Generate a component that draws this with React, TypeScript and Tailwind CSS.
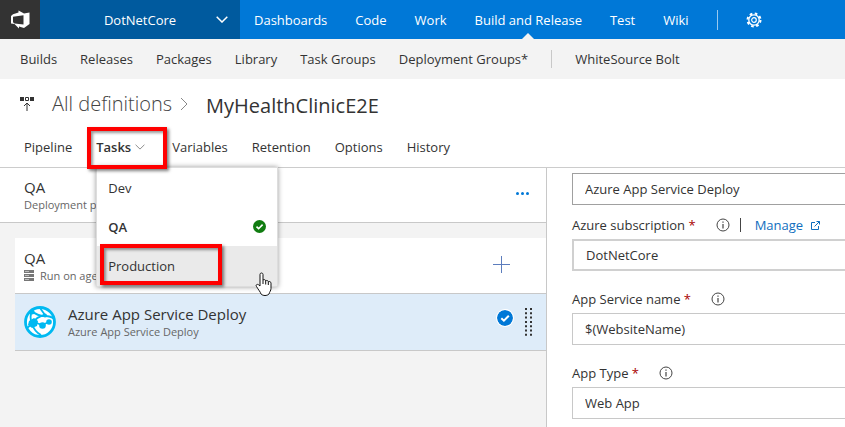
import type { ReactNode } from "react";

const hubs = ["Dashboards", "Code", "Work", "Build and Release", "Test", "Wiki"];
const sections = ["Builds", "Releases", "Packages", "Library", "Task Groups", "Deployment Groups*"];

function Chevron({ className, width = 1 }: { className: string; width?: number }) {
  return (
    <svg viewBox="0 0 12 7" className={className} fill="none" stroke="currentColor" strokeWidth={width} aria-hidden="true">
      <path d="M.7.8 6 6 11.3.8" />
    </svg>
  );
}

function Highlight({ className }: { className: string }) {
  return (
    <span
      className={`pointer-events-none absolute border-4 border-[#ff0000] shadow-[2px_2px_3px_rgba(0,0,0,0.5),inset_2px_2px_3px_rgba(0,0,0,0.4)] ${className}`}
    />
  );
}

function Logo() {
  return (
    <svg viewBox="0 0 20 20" className="h-5 w-5" aria-hidden="true">
      <path
        fill="#fff"
        fillRule="evenodd"
        d="M1 6 3 4.200 8.500 2.500V.5l5.500 3 5.500-1V14l-5.500 4-5-1.600v2L4.500 14 1 13.500ZM3 6.800v5.400l1.500 1.300 9 1V5.200Z"
      />
    </svg>
  );
}

function Gear() {
  return (
    <svg viewBox="0 0 16 16" className="h-4 w-4" fill="none" stroke="#fff" aria-hidden="true">
      <circle cx="8" cy="8" r="6.500" strokeWidth="2" strokeDasharray="2.600 2.505" />
      <circle cx="8" cy="8" r="5.200" strokeWidth="1.300" />
      <circle cx="8" cy="8" r="2.300" strokeWidth="1.200" />
    </svg>
  );
}

function InfoIcon() {
  return (
    <svg viewBox="0 0 14 14" className="h-3.5 w-3.5" fill="none" stroke="#444" aria-hidden="true">
      <circle cx="7" cy="7" r="6" />
      <path d="M7 6v4.500M7 3.500v1.200" strokeWidth="1.200" />
    </svg>
  );
}

function CheckBadge({ className }: { className: string }) {
  return (
    <svg viewBox="0 0 16 16" className={className} aria-hidden="true">
      <circle cx="8" cy="8" r="8" fill="currentColor" />
      <path d="m4.300 8.200 2.600 2.500 4.900-5" fill="none" stroke="#fff" strokeWidth="2" />
    </svg>
  );
}

function WebAppIcon() {
  return (
    <svg viewBox="0 0 32 32" className="h-8 w-8 shrink-0" aria-hidden="true">
      <circle cx="16" cy="16" r="14.500" fill="#fff" />
      <g fill="none" stroke="#00b9f1" strokeWidth="1.800">
        <path d="M8 5c3 3 8 5 13 5 4 0 7 1 9 3M21 9C15 10 11 13 8 18M8 18c2 6 5 9 9 11M10 16l8 3 7-3M8 5C6 9 6 13 8 18M8 18l-5 4M21 9l-5-7" />
      </g>
      <g fill="#00b9f1">
        <path d="m5 15 5-3 4 3-1 5-5 2-4-3Z" />
        <circle cx="21" cy="9.500" r="2" />
        <circle cx="18.500" cy="19.500" r="3.300" />
        <circle cx="25" cy="16" r="2.800" />
        <circle cx="8" cy="6" r="2.500" />
      </g>
      <circle cx="16" cy="16" r="14.500" fill="none" stroke="#00b9f1" strokeWidth="2.800" />
    </svg>
  );
}

function Field({ id, label, value, border, children }: { id: string; label: string; value: string; border: string; children?: ReactNode }) {
  return (
    <div>
      <div className="flex h-7 items-center">
        <label htmlFor={id}>
          {label} <span className="text-[#a80000]">*</span>
        </label>
        <button type="button" aria-label={`About ${label}`} className="ml-5">
          <InfoIcon />
        </button>
        {children}
      </div>
      <input id={id} defaultValue={value} className={`block h-8 w-full border-r-0 bg-white px-3 outline-none ${border}`} />
    </div>
  );
}

export default function App() {
  return (
    <div className="flex min-h-screen flex-col overflow-hidden bg-white font-['Open_Sans','Noto_Sans',sans-serif] text-[13px] leading-5 text-[#333]">
      <header className="flex h-[39px] bg-[#0078d7] whitespace-nowrap text-white">
        <a href="#home" aria-label="Home" className="flex w-10 shrink-0 items-center justify-center bg-[#333]">
          <Logo />
        </a>
        <button type="button" className="flex w-[200px] shrink-0 items-center justify-between bg-[#005a9e] pr-3 pl-6">
          <span className="flex-1 text-center">DotNetCore</span>
          <Chevron className="h-[7px] w-3" width={1.5} />
        </button>
        <nav className="flex items-center gap-7 pl-3.5">
          {hubs.map((hub) => (
            <a key={hub} href="#hub" className="relative flex h-full items-center">
              {hub}
              {hub === "Build and Release" && (
                <svg viewBox="0 0 12 6" className="absolute bottom-0 left-1/2 h-1.5 w-3 -translate-x-1/2" aria-hidden="true">
                  <path d="m0 6 6-6 6 6Z" fill="#f3f3f3" />
                </svg>
              )}
            </a>
          ))}
          <span className="h-5 w-px bg-white/60" />
          <button type="button" aria-label="Settings">
            <Gear />
          </button>
        </nav>
      </header>

      <nav className="flex h-10 items-center gap-[23px] bg-[#f3f3f3] pl-5 whitespace-nowrap">
        {sections.map((section) => (
          <a key={section} href="#section">{section}</a>
        ))}
        <span className="h-[18px] w-px bg-[#c8c8c8]" />
        <a href="#bolt">WhiteSource Bolt</a>
      </nav>

      <div className="flex h-[50px] items-center pl-5 text-[20px] leading-7 whitespace-nowrap">
        <svg viewBox="0 0 16 16" className="h-4 w-4 shrink-0" aria-hidden="true">
          <path fill="#333" d="M0 1h4v4H0Zm10 0h4v4h-4Z" />
          <path fill="none" stroke="#333" d="M5.500 1.500h3v3h-3ZM7 15V7.500M4 10l3-3 3 3" />
        </svg>
        <a href="#definitions" className="ml-4 font-light text-[#444]">All definitions</a>
        <svg viewBox="0 0 8 14" className="ml-2 h-3.5 w-2 shrink-0 text-[#888]" fill="none" stroke="currentColor" aria-hidden="true">
          <path d="m1 1 6 6-6 6" />
        </svg>
        <h1 className="ml-[18px] pt-1">MyHealthClinicE2E</h1>
      </div>

      <nav className="-mt-0.5 flex h-[41px] items-center gap-6 border-b border-[#ccc] pl-6 whitespace-nowrap">
        <a href="#pipeline">Pipeline</a>
        <div className="relative z-10 flex h-full w-[52px] items-center">
          <button type="button" aria-expanded="true" className="flex items-center gap-1 font-semibold">
            Tasks
            <Chevron className="h-1.5 w-2.5 text-[#777]" />
          </button>
          <div className="absolute top-full left-0 w-[182px] border border-[#ddd] bg-white shadow-[0_0_5px_rgba(0,0,0,0.4)]">
            <button type="button" className="flex h-[39px] w-full items-center px-[11px]">Dev</button>
            <button type="button" className="flex h-[39px] w-full items-center justify-between px-[11px] font-semibold">
              QA
              <CheckBadge className="h-[13px] w-[13px] text-[#107c10]" />
            </button>
            <button type="button" className="relative flex h-10 w-full items-center bg-[#eaeaea] px-[11px]">
              Production
              <Highlight className="-top-0.5 left-[3px] h-[41px] w-[122px]" />
            </button>
            <svg viewBox="0 0 18 24" className="absolute top-[104px] left-[157px] h-6 w-[18px]" aria-hidden="true">
              <path
                d="M6 14V2.500C6 .5 9 .5 9 2.500V8c1-.8 2.500-.4 2.700.8 1-.7 2.400-.3 2.600.9 1.200-.5 2.700 0 2.700 1.500v5.300c0 2-1.500 3.500-2 5.500-2 2-6 2-8 0-.5-2-2.500-4-4.500-7.500C1.200 12.800 3.500 11.800 4.600 12.800Z"
                fill="#fff"
                stroke="#111"
              />
              <path d="M9 8v4M11.700 9v3.500M14.300 10v3" stroke="#111" />
            </svg>
          </div>
          <Highlight className="top-0 -left-[9px] h-[42px] w-20" />
        </div>
        <a href="#variables">Variables</a>
        <a href="#retention">Retention</a>
        <a href="#options">Options</a>
        <a href="#history">History</a>
      </nav>

      <main className="flex flex-1">
        <section className="w-[547px] shrink-0 border-r border-[#c8c8c8] bg-[#f3f3f3]">
          <div className="flex h-[55px] items-center justify-between border-b border-[#c8c8c8] bg-white pr-[17px] pl-6">
            <div>
              <h2 className="text-[15px]">QA</h2>
              <p className="text-[11px] leading-4 text-[#666]">Deployment process</p>
            </div>
            <button type="button" aria-label="More actions" className="flex gap-0.5 pb-1">
              <i className="h-[3px] w-[3px] rounded-full bg-[#0078d7]" />
              <i className="h-[3px] w-[3px] rounded-full bg-[#0078d7]" />
              <i className="h-[3px] w-[3px] rounded-full bg-[#0078d7]" />
            </button>
          </div>

          <div className="mt-[15px] ml-[15px] bg-white">
            <div className="flex h-14 items-center justify-between border-b border-[#c8c8c8] pr-9 pl-[9px]">
              <div>
                <h3 className="text-[15px]">QA</h3>
                <p className="flex items-center gap-1.5 text-[11px] leading-4 text-[#666]">
                  <svg viewBox="0 0 10 11" className="h-[11px] w-2.5" aria-hidden="true">
                    <path fill="#777" d="M0 0h10v3H0Zm0 4h10v3H0Zm0 4h10v3H0Z" />
                    <path stroke="#bbb" d="M1 1.500h4M1 5.500h4M1 9.500h4" />
                  </svg>
                  Run on agent
                </p>
              </div>
              <button type="button" aria-label="Add task" className="pb-0.5">
                <svg viewBox="0 0 17 17" className="block h-[17px] w-[17px]" aria-hidden="true">
                  <path d="M8.500 0v17M0 8.500h17" stroke="#5c7dbd" />
                </svg>
              </button>
            </div>
            <div className="flex h-[57px] items-center border-b border-[#c8c8c8] bg-[#deecf9] pr-3.5 pl-[9px]">
              <WebAppIcon />
              <div className="ml-3 flex-1">
                <h3 className="text-[15px] leading-5">Azure App Service Deploy</h3>
                <p className="text-[11px] leading-4 text-[#666]">Azure App Service Deploy</p>
              </div>
              <CheckBadge className="mb-2 h-4 w-4 rounded-full text-[#0078d7] ring-1 ring-white" />
              <svg viewBox="0 0 7 28" className="ml-3 h-7 w-[7px]" aria-hidden="true">
                <path d="M1 0v28M6 0v28" stroke="#333" strokeWidth="2" strokeDasharray="2 2.300" />
              </svg>
            </div>
          </div>
        </section>

        <form className="flex min-w-0 flex-1 flex-col gap-3.5 pt-[5px] pb-2 pl-[25px] whitespace-nowrap">
          <div className="flex flex-col gap-1.5">
            <input
              aria-label="Display name"
              defaultValue="Azure App Service Deploy"
              className="block h-8 w-full border border-r-0 border-[#a0a0a0] bg-white px-3 outline-none"
            />
            <Field id="subscription" label="Azure subscription" value="DotNetCore" border="border-2 border-[#d0d0d0]">
              <span className="ml-2.5 h-3.5 w-px bg-[#444]" />
              <a href="#manage" className="ml-3.5 flex items-center gap-2 text-[#106ebe]">
                Manage
                <svg viewBox="0 0 9 9" className="h-[9px] w-[9px]" fill="none" stroke="currentColor" aria-hidden="true">
                  <path d="M4 1.500H.5v7h7V5M3.500 5.500l5-5M5.500.5h3v3" />
                </svg>
              </a>
            </Field>
          </div>
          <Field id="service-name" label="App Service name" value="$(WebsiteName)" border="border border-[#c8c8c8]" />
          <Field id="app-type" label="App Type" value="Web App" border="border border-[#c8c8c8]" />
        </form>
      </main>
    </div>
  );
}
